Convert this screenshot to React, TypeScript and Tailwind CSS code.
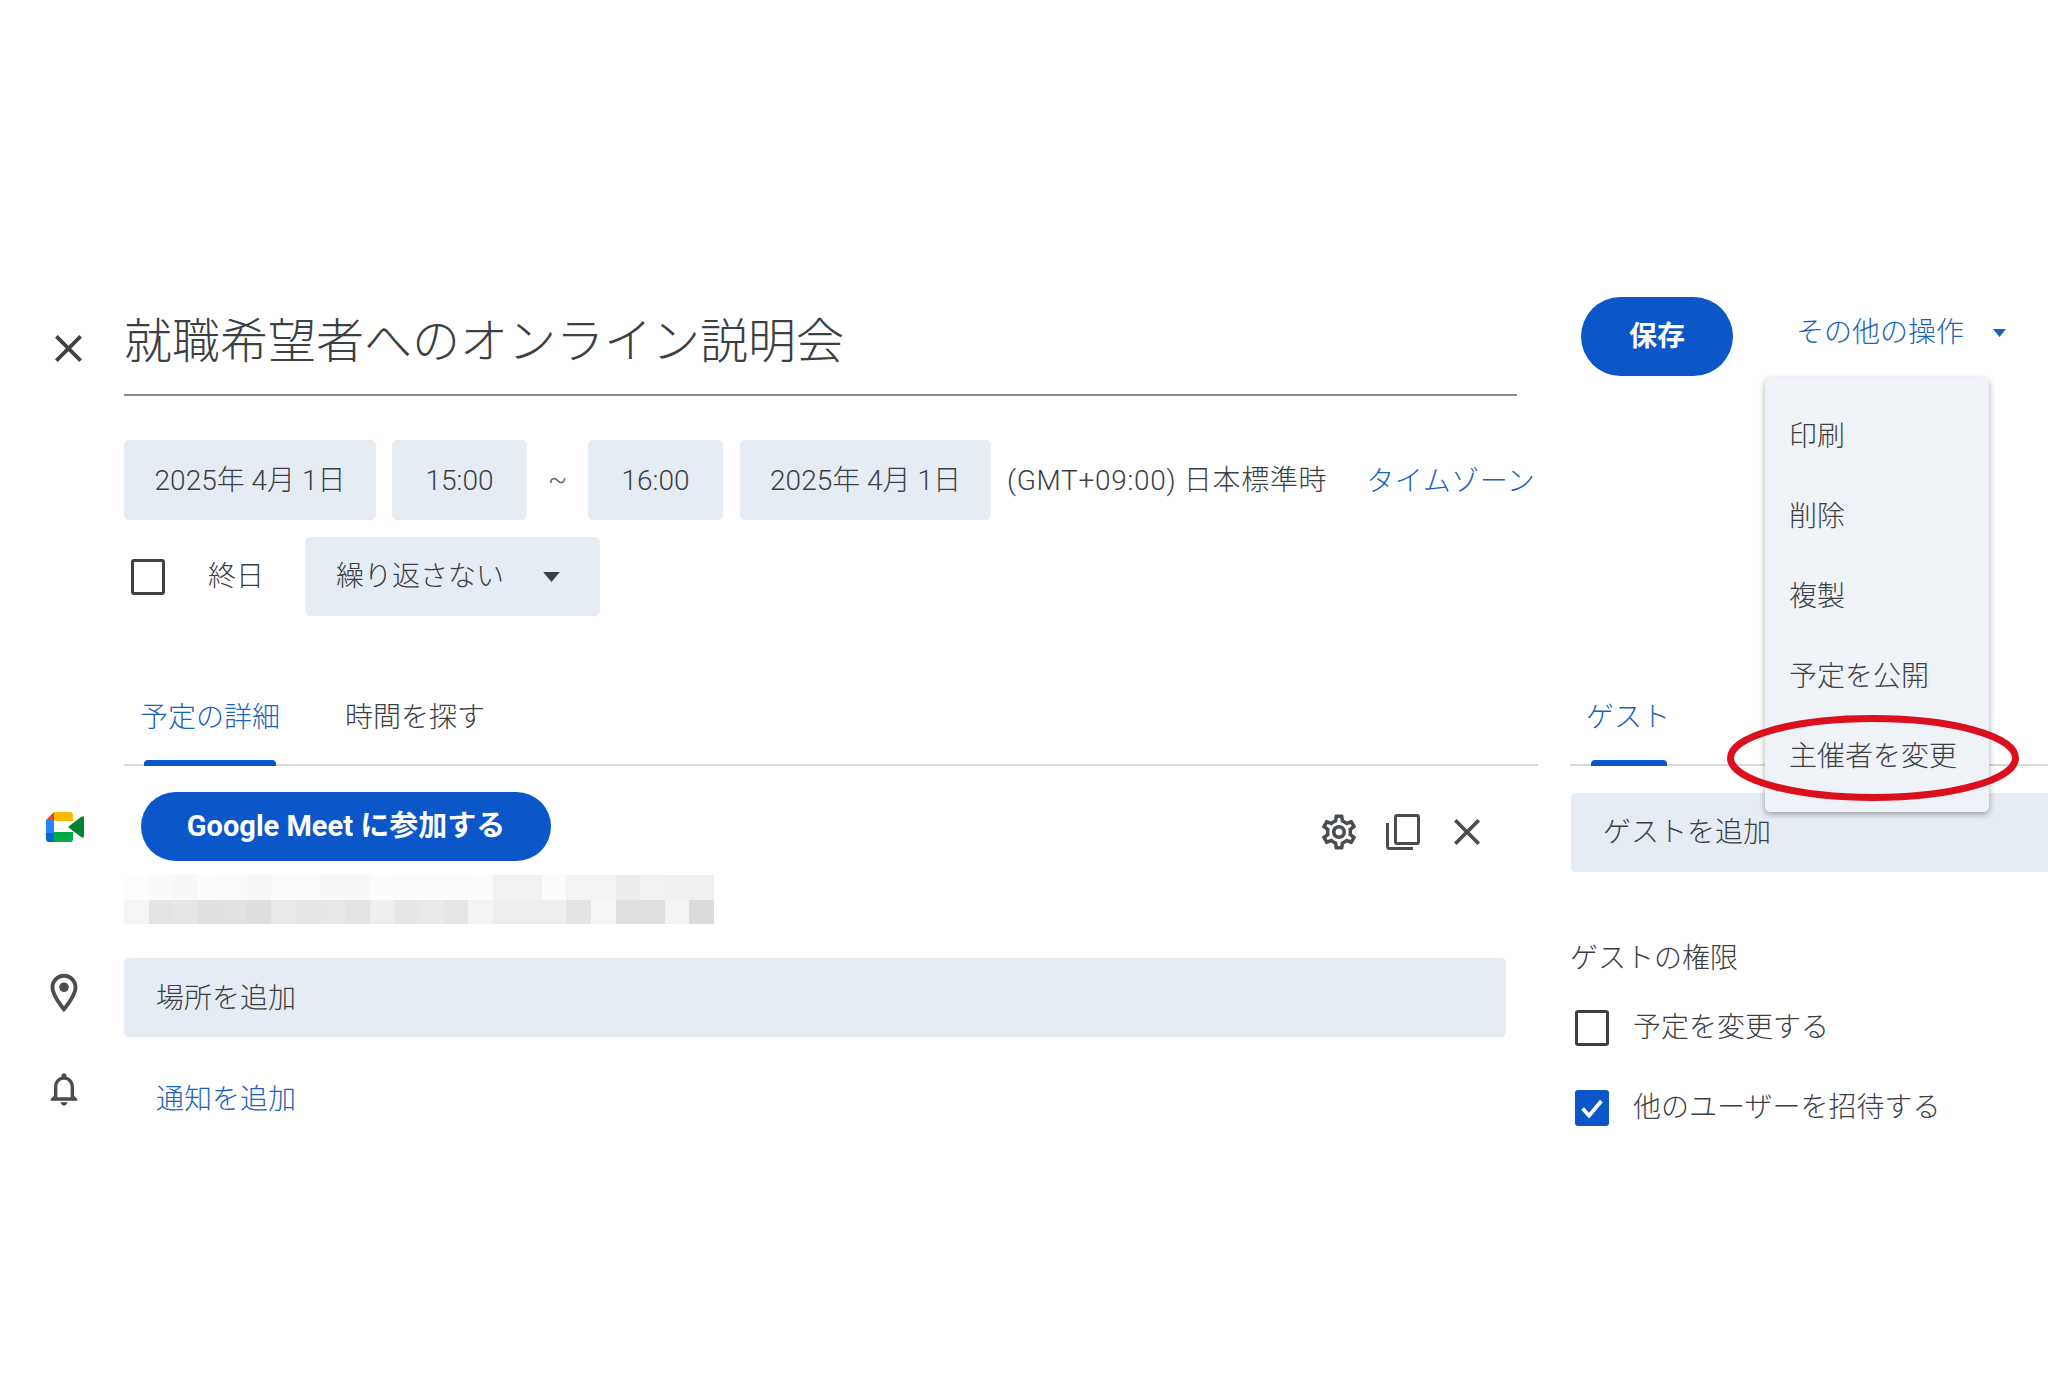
import { MdOutlineSettings, MdOutlineNotifications, MdOutlineLocationOn } from "react-icons/md";

const FONT = "font-['Roboto','Noto_Sans_CJK_JP',sans-serif]";

const mosaicTop = [
  "#fdfdfd", "#fafafa", "#f8f8f8", "#fcfcfc", "#fbfbfb", "#f8f8f8", "#fbfbfb", "#fbfbfb", "#f8f8f8", "#f8f8f8", "#fcfcfc", "#fbfbfb",
  "#fbfbfb", "#fbfbfb", "#fcfcfc", "#f1f1f1", "#f1f1f1", "#fbfbfb", "#f3f3f3", "#f3f3f3", "#ebebeb", "#f1f1f1", "#efefef", "#efefef",
];
const mosaicBottom = [
  "#f5f5f5", "#e4e4e4", "#e6e6e6", "#e0e0e0", "#e2e2e2", "#dedede", "#e9e9e9", "#e6e6e6", "#e7e7e7", "#e3e3e3", "#eeeeee", "#e6e6e6",
  "#e9e9e9", "#e5e5e5", "#f3f3f3", "#eeeeee", "#eeeeee", "#eeeeee", "#e4e4e4", "#f6f6f6", "#dfdfdf", "#dfdfdf", "#f3f3f3", "#dcdcdc",
];

const CloseIcon = ({ className }: { className: string }) => (
  <svg viewBox="5 5 14 14" className={className} fill="currentColor">
    <path d="M19 6.41L17.59 5 12 10.59 6.41 5 5 6.41 10.59 12 5 17.59 6.41 19 12 13.41 17.59 19 19 17.59 13.41 12z" />
  </svg>
);

const Caret = ({ className }: { className: string }) => (
  <svg viewBox="0 0 10 6" className={className} fill="currentColor">
    <path d="M0 0h10L5 6z" />
  </svg>
);

const MeetLogo = () => (
  <svg viewBox="0 0 38 30" className="w-[38px] h-[30px]">
    <path d="M8 0L0 8h8z" fill="#ea4335" />
    <path d="M0 8h8v13H0z" fill="#2684fc" />
    <path d="M0 21h8v9H3q-3 0-3-3z" fill="#0066da" />
    <path d="M8 0h16q3 0 3 3v6H8z" fill="#ffba00" />
    <path d="M8 20h19v7q0 3-3 3H8z" fill="#00ac47" />
    <path d="M8 9h15v11H8z" fill="#ffffff" />
    <path d="M22 15L35 5q3-2 3 1v18q0 3-3 1z" fill="#00832d" />
  </svg>
);

const CopyIcon = () => (
  <svg viewBox="0 0 34 36" className="w-[34px] h-[36px]" fill="none" stroke="#4a4d50" strokeWidth="3">
    <rect x="9.5" y="1.5" width="23" height="28" rx="1.5" />
    <path d="M1.5 9v23.5q0 2 2 2H27" />
  </svg>
);

const Checkbox = ({ checked }: { checked?: boolean }) =>
  checked ? (
    <span className="w-[34px] h-[36px] rounded-[3px] bg-[#0b57c9] flex items-center justify-center shrink-0">
      <svg viewBox="0 0 24 24" className="w-[28px] h-[28px]" fill="none" stroke="#ffffff" strokeWidth="3.2">
        <path d="M4 12.5l5.5 6L20 6" />
      </svg>
    </span>
  ) : (
    <span className="w-[34px] h-[36px] rounded-[3px] border-[3px] border-[#3c4043] bg-white shrink-0" />
  );

const Chip = ({ children, className }: { children: React.ReactNode; className: string }) => (
  <div className={`h-[80px] rounded-[5px] bg-[#e6ecf4] flex items-center justify-center pt-[2px] text-[28px] font-light text-[#3c4043] ${className}`}>
    {children}
  </div>
);

const menuItems = ["印刷", "削除", "複製", "予定を公開", "主催者を変更"];

export default function App() {
  return (
    <div className={`relative w-[2048px] h-[1376px] overflow-hidden bg-white ${FONT}`}>
      <div className="pt-[297px]">
        {/* title row */}
        <div className="flex items-start">
          <div className="w-[124px] pl-[55px] pt-[38px] text-[#3f4245]">
            <CloseIcon className="w-[27px] h-[27px]" />
          </div>
          <div className="w-[1393px] h-[99px] border-b-2 border-[#8a8a8a] text-[48px] leading-[90px] font-light text-[#3c4043] whitespace-nowrap">
            就職希望者へのオンライン説明会
          </div>
          <div className="ml-[64px] w-[152px] h-[79px] rounded-full bg-[#0b57c9] flex items-center justify-center text-[28px] font-bold text-white">
            保存
          </div>
          <div className="ml-[63px] h-[72px] flex items-center text-[28px] font-light text-[#1a62bd] whitespace-nowrap">
            その他の操作
            <Caret className="ml-[29px] w-[13px] h-[8px]" />
          </div>
        </div>

        {/* date row */}
        <div className="flex items-center pl-[124px] mt-[44px] whitespace-nowrap">
          <Chip className="w-[252px]">2025年 4月 1日</Chip>
          <Chip className="w-[135px] ml-[16px]">15:00</Chip>
          <span className="w-[61px] text-center text-[28px] font-light text-[#5f6368]">~</span>
          <Chip className="w-[135px]">16:00</Chip>
          <Chip className="w-[251px] ml-[17px]">2025年 4月 1日</Chip>
          <span className="ml-[16px] pt-[2px] text-[28px] font-light tracking-[0.7px] text-[#3c4043]">(GMT+09:00) 日本標準時</span>
          <span className="ml-[39px] pt-[4px] text-[28px] font-light tracking-[0.5px] text-[#1a62bd]">タイムゾーン</span>
        </div>

        {/* repeat row */}
        <div className="flex items-center pl-[131px] mt-[17px]">
          <Checkbox />
          <span className="ml-[43px] text-[28px] font-light text-[#3c4043]">終日</span>
          <div className="ml-[41px] w-[295px] h-[79px] rounded-[5px] bg-[#e6ecf4] flex items-center pl-[31px] text-[28px] font-light text-[#3c4043]">
            繰り返さない
            <Caret className="ml-[39px] w-[17px] h-[10px] text-[#3c4043]" />
          </div>
        </div>

        {/* columns */}
        <div className="flex mt-[50px]">
          <div className="w-[1538px] shrink-0">
            <div className="ml-[124px] h-[100px] border-b-2 border-[#d9d9d9] flex text-[28px] font-light">
              <div className="relative ml-[18px] w-[138px] pt-[31px] -indent-[2px] text-[#1a62bd] whitespace-nowrap">
                予定の詳細
                <span className="absolute left-[2px] right-[4px] -bottom-[2px] h-[6px] rounded-t-[4px] bg-[#0b57c9]" />
              </div>
              <div className="ml-[65px] pt-[31px] text-[#3c4043] whitespace-nowrap">時間を探す</div>
            </div>

            <div className="flex mt-[26px]">
              <div className="w-[141px] pl-[46px] pt-[20px]">
                <MeetLogo />
              </div>
              <div className="w-[410px] h-[69px] rounded-full bg-[#0b57c9] flex items-center justify-center text-[29px] font-bold text-white whitespace-nowrap">
                Google Meet に参加する
              </div>
              <div className="ml-[767px] mt-[10px] h-[59px] flex items-center text-[#4a4d50]">
                <MdOutlineSettings className="w-[42px] h-[42px]" />
                <div className="ml-[26px]">
                  <CopyIcon />
                </div>
                <div className="ml-[34px]">
                  <CloseIcon className="w-[26px] h-[26px]" />
                </div>
              </div>
            </div>

            <div className="ml-[124px] mt-[14px] w-[590px]">
              <div className="flex h-[25px]">
                {mosaicTop.map((c, i) => (
                  <div key={i} className="flex-1" style={{ backgroundColor: c }} />
                ))}
              </div>
              <div className="flex h-[24px]">
                {mosaicBottom.map((c, i) => (
                  <div key={i} className="flex-1" style={{ backgroundColor: c }} />
                ))}
              </div>
            </div>

            <div className="flex mt-[34px]">
              <div className="w-[124px] pl-[41px] pt-[12px] text-[#4a4d50]">
                <MdOutlineLocationOn className="w-[46px] h-[46px]" />
              </div>
              <div className="w-[1382px] h-[79px] rounded-[5px] bg-[#e6ecf4] flex items-center pl-[32px] pt-[2px] text-[28px] font-light text-[#3c4043]">
                場所を追加
              </div>
            </div>

            <div className="flex mt-[27px]">
              <div className="w-[124px] pl-[44px] pt-[5px] text-[#4a4d50]">
                <MdOutlineNotifications className="w-[40px] h-[40px]" />
              </div>
              <div className="pl-[32px] pt-[15px] text-[28px] font-light text-[#1a62bd]">通知を追加</div>
            </div>
          </div>

          {/* guests column */}
          <div className="ml-[32px] flex-1">
            <div className="h-[100px] border-b-2 border-[#d9d9d9] flex text-[28px] font-light">
              <div className="relative ml-[16px] w-[84px] pt-[31px] text-[#1a62bd] whitespace-nowrap">
                ゲスト
                <span className="absolute left-[5px] right-[3px] -bottom-[2px] h-[6px] rounded-t-[4px] bg-[#0b57c9]" />
              </div>
            </div>
            <div className="mt-[27px] ml-[1px] h-[79px] rounded-l-[5px] bg-[#e6ecf4] flex items-center pl-[32px] text-[28px] font-light text-[#3c4043]">
              ゲストを追加
            </div>
            <div className="mt-[67px] text-[28px] leading-[40px] font-light text-[#3c4043]">ゲストの権限</div>
            <div className="mt-[31px] pl-[5px] flex items-center text-[28px] leading-[36px] font-light text-[#3c4043]">
              <Checkbox />
              <span className="ml-[24px]">予定を変更する</span>
            </div>
            <div className="mt-[44px] pl-[5px] flex items-center text-[28px] leading-[36px] font-light text-[#3c4043]">
              <Checkbox checked />
              <span className="ml-[24px]">他のユーザーを招待する</span>
            </div>
          </div>
        </div>
      </div>

      {/* dropdown menu */}
      <div className="absolute left-[1765px] top-[378px] w-[224px] h-[434px] rounded-[5px] bg-[#eff2f7] shadow-[0_2px_6px_rgba(0,0,0,0.35)] pt-[19px] pl-[24px] text-[28px] font-light text-[#3c4043]">
        {menuItems.map((item) => (
          <div key={item} className="h-[80px] flex items-center whitespace-nowrap">
            {item}
          </div>
        ))}
      </div>

      {/* red annotation */}
      <svg viewBox="0 0 292 86" className="absolute left-[1727px] top-[715px] w-[292px] h-[86px]" fill="none">
        <ellipse cx="146" cy="43" rx="142.5" ry="39.5" stroke="#dc0f1e" strokeWidth="7" />
      </svg>
    </div>
  );
}
